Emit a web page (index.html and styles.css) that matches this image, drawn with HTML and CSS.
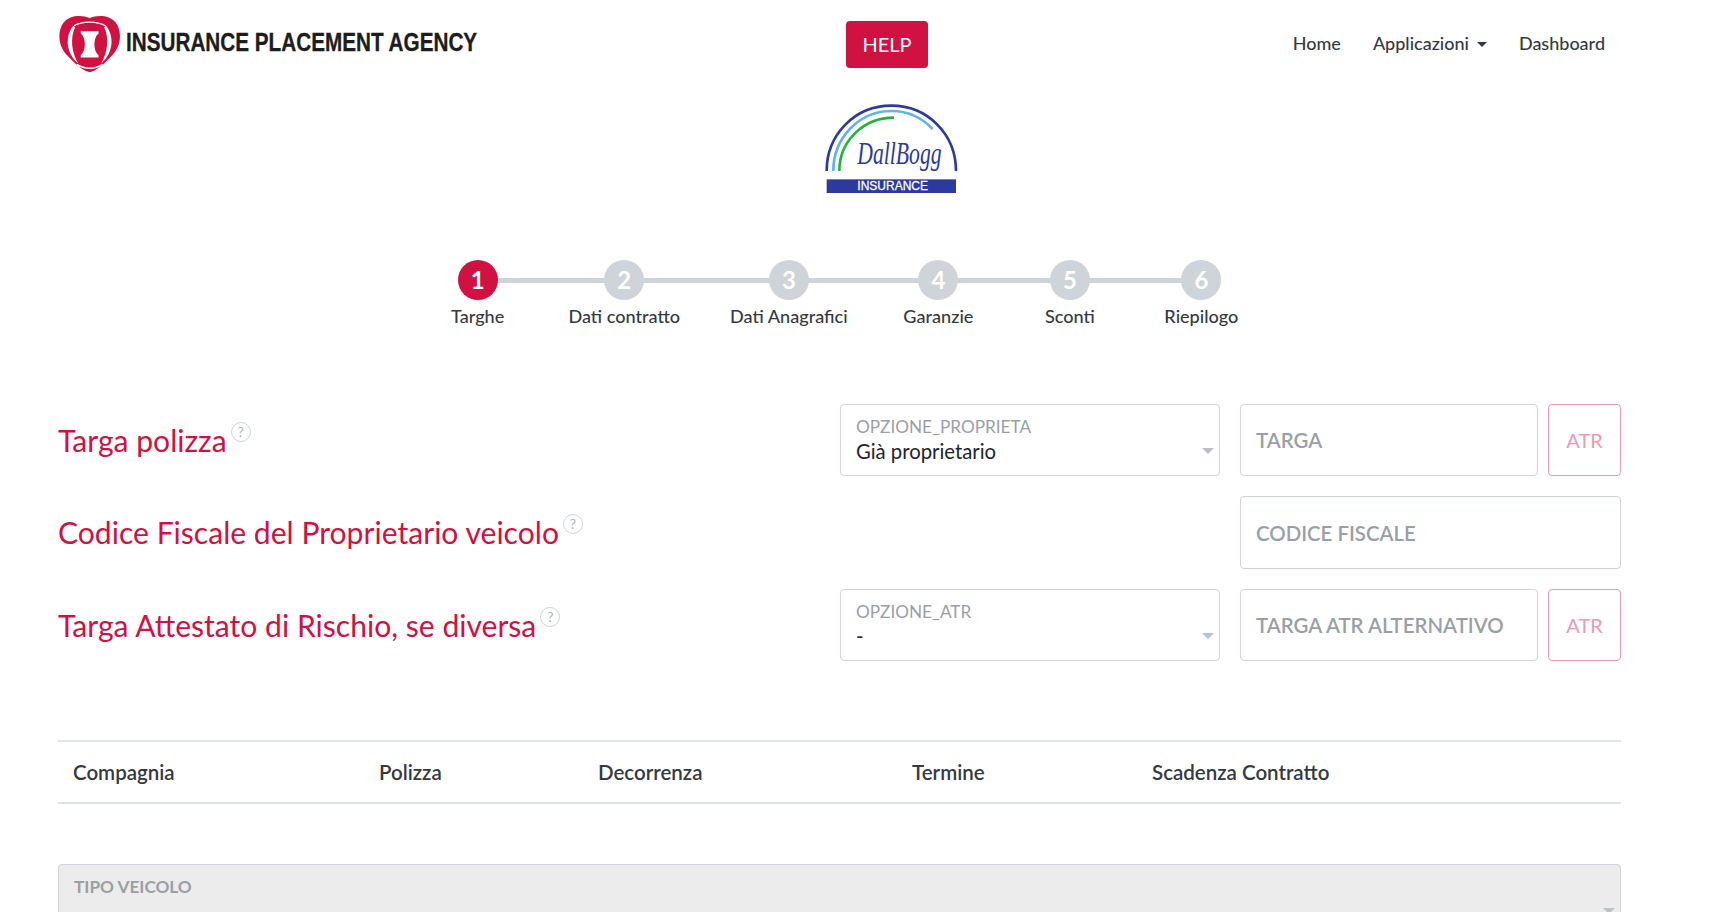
FILE: index.html
```html
<!DOCTYPE html>
<html lang="it">
<head>
  <meta charset="UTF-8">
  <title>Insurance Placement Agency</title>
  <link rel="stylesheet" href="styles.css">
</head>
<body>
  <div class="container">

    <!-- Header -->
    <header class="topbar">
      <a class="brand" href="#">
        <svg class="brand-mark" viewBox="54 30 186 175">
          <path fill="#d01142" d="M146 42C125 32 88 32 70 55C50 82 55 125 80 150C95 165 115 190 146 200C177 190 197 165 212 150C237 125 242 82 222 55C204 32 167 32 146 42Z"/>
          <path fill="none" stroke="#fff" stroke-width="3.5" d="M100 64C125 50 167 50 192 64"/>
          <path fill="#fff" d="M98 64C74 95 76 142 112 174C94 142 88 100 104 68Z"/>
          <path fill="#fff" d="M194 64C218 95 216 142 180 174C198 142 204 100 188 68Z"/>
          <path fill="none" stroke="#fff" stroke-width="5" d="M108 177C130 192 162 192 184 177"/>
          <path fill="#fff" d="M120 80H172V87C156 98 156 140 172 150V157H120V150C136 140 136 98 120 87Z"/>
        </svg>
        <span class="brand-name">INSURANCE PLACEMENT AGENCY</span>
      </a>
      <button class="btn-help">HELP</button>
      <nav class="nav">
        <a href="#">Home</a>
        <a href="#" class="dropdown">Applicazioni</a>
        <a href="#">Dashboard</a>
      </nav>
    </header>

    <!-- Client logo -->
    <div class="client-logo">
      <svg viewBox="0 0 540 330" width="180" height="110">
        <path class="arc-blue" d="M80 240C80 130 165 44 274 44C383 44 468 130 468 240"/>
        <path class="arc-light" d="M100 240C100 140 178 60 274 60C322 60 366 80 398 114"/>
        <path class="arc-green" d="M118 240C118 150 190 80 282 80"/>
        <text class="sign" transform="translate(172 218) scale(1 1.5)">DallBogg</text>
        <rect x="80" y="265" width="388" height="41" fill="#2b3a9c"/>
        <text class="sign-sub" x="172" y="298">INSURANCE</text>
      </svg>
    </div>

    <!-- Steps -->
    <ol class="steps">
      <li class="step active"><span class="dot">1</span><span class="step-label">Targhe</span></li>
      <li class="step"><span class="dot">2</span><span class="step-label">Dati contratto</span></li>
      <li class="step"><span class="dot">3</span><span class="step-label">Dati Anagrafici</span></li>
      <li class="step"><span class="dot">4</span><span class="step-label">Garanzie</span></li>
      <li class="step"><span class="dot">5</span><span class="step-label">Sconti</span></li>
      <li class="step"><span class="dot">6</span><span class="step-label">Riepilogo</span></li>
    </ol>

    <!-- Form -->
    <form class="form">
      <div class="form-row">
        <h2 class="row-title">Targa polizza<span class="hint">?</span></h2>
        <div class="select-box">
          <span class="select-label">OPZIONE_PROPRIETA</span>
          <span class="select-value">Già proprietario</span>
        </div>
        <div class="input-group">
          <input class="input" placeholder="TARGA">
          <button type="button" class="btn-atr">ATR</button>
        </div>
      </div>
      <div class="form-row">
        <h2 class="row-title">Codice Fiscale del Proprietario veicolo<span class="hint">?</span></h2>
        <div></div>
        <div class="input-group">
          <input class="input" placeholder="CODICE FISCALE">
        </div>
      </div>
      <div class="form-row">
        <h2 class="row-title">Targa Attestato di Rischio, se diversa<span class="hint">?</span></h2>
        <div class="select-box">
          <span class="select-label">OPZIONE_ATR</span>
          <span class="select-value">-</span>
        </div>
        <div class="input-group">
          <input class="input" placeholder="TARGA ATR ALTERNATIVO">
          <button type="button" class="btn-atr">ATR</button>
        </div>
      </div>
    </form>

    <!-- Policies -->
    <table class="table">
      <thead>
        <tr>
          <th class="col-company">Compagnia</th>
          <th class="col-policy">Polizza</th>
          <th class="col-start">Decorrenza</th>
          <th class="col-end">Termine</th>
          <th>Scadenza Contratto</th>
        </tr>
      </thead>
    </table>

    <div class="select-box disabled">
      <span class="select-label">TIPO VEICOLO</span>
    </div>
  </div>
</body>
</html>
```

FILE: styles.css
```css
/* App Styles */
html, body {
  margin: 0;
  height: 100%;
  overflow: hidden;
}

body {
  font-family: Lato, "Open Sans", sans-serif;
  background-color: #fff;
  color: #343a40;
}

.container {
  width: 1563px;
  margin-left: 58px;
}

/* Header */
.topbar {
  display: flex;
  align-items: center;
  height: 88px;
}

.brand {
  display: flex;
  align-items: center;
  gap: 4px;
  width: 417px;
  margin-top: -1px;
  text-decoration: none;
}

.brand-mark {
  flex-shrink: 0;
  width: 64px;
  height: 60px;
}

.brand-name {
  flex-shrink: 0;
  font-family: "Liberation Sans", sans-serif;
  font-weight: 700;
  font-size: 25px;
  color: #1d1d1b;
  white-space: nowrap;
  margin-top: -2px;
  transform: scaleX(.828);
  transform-origin: left center;
  -webkit-text-stroke: .3px #1d1d1b;
}

.btn-help {
  flex-shrink: 0;
  margin-left: 371px;
  width: 82px;
  height: 47px;
  background-color: #d01142;
  color: #fff;
  border: none;
  border-radius: 4px;
  font-family: inherit;
  font-size: 20px;
}

.nav {
  display: flex;
  gap: 32px;
  margin-left: auto;
  padding-right: 16px;
  margin-top: -2px;
}

.nav a {
  color: #343a40;
  font-size: 18px;
  font-weight: 500;
  text-decoration: none;
}

.dropdown::after {
  content: "";
  display: inline-block;
  margin-left: 8px;
  vertical-align: 3px;
  border-top: 5px solid #343a40;
  border-left: 5px solid transparent;
  border-right: 5px solid transparent;
}

/* Client logo */
.client-logo {
  display: flex;
  justify-content: center;
  height: 112px;
  padding: 3px 0 0 100px;
  margin-bottom: -3px;
}

.arc-blue, .arc-light, .arc-green {
  fill: none;
  stroke-width: 8;
}

.arc-blue { stroke: #2b3a9c; }
.arc-light { stroke: #62b5e0; }
.arc-green { stroke: #1fb53a; }

.sign {
  font-family: "Liberation Serif", serif;
  font-style: italic;
  font-size: 65px;
  fill: #2b3a9c;
}

.sign-sub {
  font-family: "Liberation Sans", sans-serif;
  font-size: 36px;
  fill: #fff;
  stroke: #fff;
  stroke-width: .8;
}

/* Steps */
.steps {
  display: flex;
  justify-content: center;
  list-style: none;
  margin: 60px 0 0;
  padding: 0;
}

.step {
  position: relative;
  display: flex;
  flex-direction: column;
  align-items: center;
  min-width: 131.5px;
  padding: 0 25px;
  box-sizing: border-box;
}

.step::before, .step::after {
  content: "";
  position: absolute;
  top: 18px;
  width: 50%;
  height: 5px;
  background-color: #ced4da;
}

.step::before { left: 0; }
.step::after { right: 0; }
.step:first-child::before, .step:last-child::after { display: none; }

.dot {
  position: relative;
  z-index: 1;
  width: 40px;
  height: 40px;
  border-radius: 50%;
  background-color: #ced4da;
  color: #fff;
  font-size: 24px;
  font-weight: 700;
  line-height: 40px;
  text-align: center;
}

.active .dot {
  background-color: #d01142;
}

.step-label {
  margin-top: 3px;
  font-size: 18.1px;
  font-weight: 500;
  line-height: 27px;
  white-space: nowrap;
}

/* Form */
.form {
  display: flex;
  flex-direction: column;
  gap: 20px;
  margin-top: 74px;
}

.form-row {
  display: grid;
  grid-template-columns: 782px 380px 401px;
  height: 72px;
}

.form-row:nth-child(2) {
  height: 73px;
}

.row-title {
  margin: 0;
  color: #d01142;
  font-size: 30.1px;
  font-weight: 400;
  line-height: 72px;
}

.hint {
  display: inline-block;
  width: 18px;
  height: 18px;
  margin-left: 4px;
  border: 1px solid #ced4da;
  border-radius: 50%;
  color: #adb5bd;
  font-size: 14px;
  line-height: 18px;
  text-align: center;
  vertical-align: 15px;
}

.select-box {
  position: relative;
  display: flex;
  flex-direction: column;
  justify-content: center;
  box-sizing: border-box;
  height: 72px;
  padding: 1px 15px 0;
  border: 1px solid #ced4da;
  border-radius: 4px;
}

.select-box::after {
  content: "";
  position: absolute;
  right: 5px;
  top: 43px;
  border-top: 6px solid #bcc1c6;
  border-left: 6px solid transparent;
  border-right: 6px solid transparent;
}

.select-label {
  color: #9a9fa6;
  font-size: 17.2px;
  line-height: 22px;
}

.select-value {
  color: #212529;
  font-size: 20.3px;
  line-height: 27px;
}

.select-box.disabled {
  display: block;
  margin-top: 60px;
  padding-top: 11px;
  background-color: #ececec;
}

.select-box.disabled .select-label {
  font-weight: 700;
}

.input-group {
  display: flex;
  gap: 10px;
  margin-left: 20px;
}

.input {
  flex: 1;
  min-width: 0;
  box-sizing: border-box;
  height: 100%;
  padding: 0 15px;
  border: 1px solid #ced4da;
  border-radius: 4px;
  font-family: inherit;
  font-size: 20.4px;
}

.input::placeholder {
  color: #9a9fa6;
  font-weight: 600;
  opacity: 1;
}

.btn-atr {
  width: 73px;
  height: 100%;
  background-color: #fff;
  color: #eb9ab0;
  border: 1px solid #eb9ab0;
  border-radius: 4px;
  font-family: inherit;
  font-size: 20px;
}

/* Table */
.table {
  width: 100%;
  margin-top: 79px;
  border-collapse: collapse;
  table-layout: fixed;
}

.table th {
  box-sizing: border-box;
  padding: 0 15px;
  height: 62px;
  border-top: 2px solid #e4e7ea;
  border-bottom: 2px solid #dee2e6;
  font-size: 20.5px;
  font-weight: 600;
  text-align: left;
}

.col-company { width: 306px; }
.col-policy { width: 219px; }
.col-start { width: 314px; }
.col-end { width: 240px; }
```
